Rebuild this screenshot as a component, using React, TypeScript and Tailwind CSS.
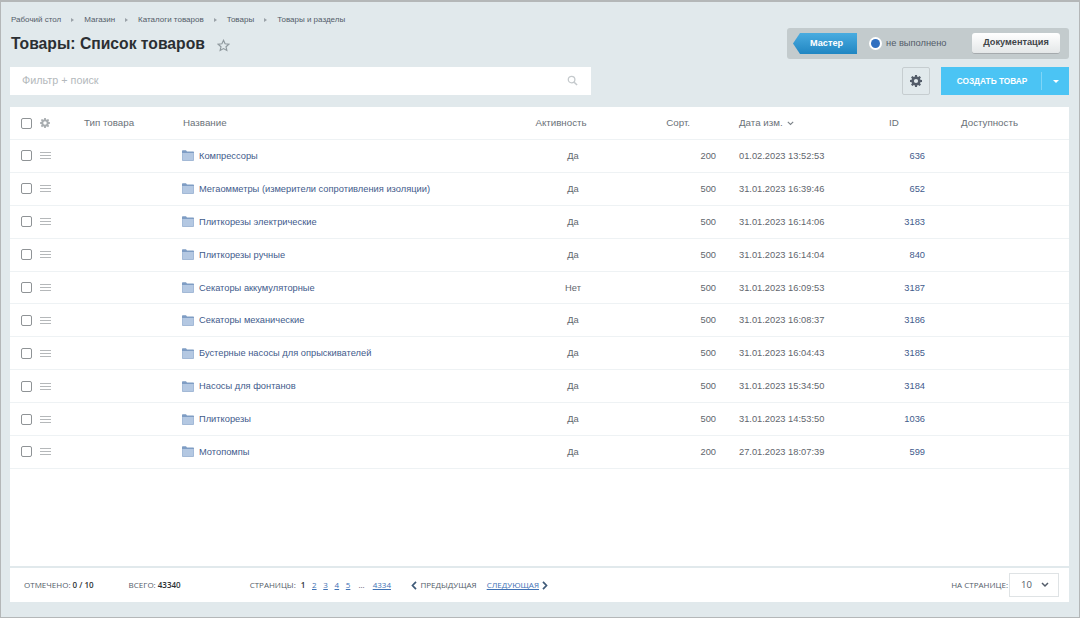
import React from 'react'

const crumbs = ['Рабочий стол', 'Магазин', 'Каталоги товаров', 'Товары', 'Товары и разделы']

const rows = [
  ['Компрессоры', 'Да', '200', '01.02.2023 13:52:53', '636'],
  ['Мегаомметры (измерители сопротивления изоляции)', 'Да', '500', '31.01.2023 16:39:46', '652'],
  ['Плиткорезы электрические', 'Да', '500', '31.01.2023 16:14:06', '3183'],
  ['Плиткорезы ручные', 'Да', '500', '31.01.2023 16:14:04', '840'],
  ['Секаторы аккумуляторные', 'Нет', '500', '31.01.2023 16:09:53', '3187'],
  ['Секаторы механические', 'Да', '500', '31.01.2023 16:08:37', '3186'],
  ['Бустерные насосы для опрыскивателей', 'Да', '500', '31.01.2023 16:04:43', '3185'],
  ['Насосы для фонтанов', 'Да', '500', '31.01.2023 15:34:50', '3184'],
  ['Плиткорезы', 'Да', '500', '31.01.2023 14:53:50', '1036'],
  ['Мотопомпы', 'Да', '200', '27.01.2023 18:07:39', '599'],
]

const cols = 'grid grid-cols-[30px_44px_99px_322px_112px_99px_23px_150px_36px_36px_1fr] items-center'

const Gear = ({ size, color }: { size: number; color: string }) => (
  <svg width={size} height={size} viewBox="0 0 16 16">
    <path
      fill={color}
      fillRule="evenodd"
      d="M6.7 0h2.6l.4 2.2 1.2.5L12.8 1.4l1.8 1.8-1.3 1.9.5 1.2 2.2.4v2.6l-2.2.4-.5 1.2 1.3 1.9-1.8 1.8-1.9-1.3-1.2.5-.4 2.1H6.7l-.4-2.1-1.2-.5-1.9 1.3-1.8-1.8 1.3-1.9-.5-1.2L0 9.3V6.7l2.2-.4.5-1.2-1.3-1.9 1.8-1.8 1.9 1.3 1.2-.5zM8 5.2a2.8 2.8 0 1 0 0 5.6 2.8 2.8 0 0 0 0-5.6z"
    />
  </svg>
)

const Checkbox = () => <span className="block w-[11px] h-[11px] rounded-[2px] border border-[#8f9396] bg-white" />

const Folder = () => (
  <svg width="12" height="11" viewBox="0 0 12 11" className="shrink-0">
    <path fill="#7f9dc4" d="M0 1.2C0 .6.4.2 1 .2h3l1 1.3h6c.6 0 1 .4 1 1v7.3c0 .6-.4 1-1 1H1c-.6 0-1-.4-1-1z" />
    <path fill="#b4c8e2" d="M.6 3h10.8c.2 0 .3.1.3.3v6.3c0 .4-.2.6-.6.6H.9c-.4 0-.6-.2-.6-.6V3.3c0-.2.1-.3.3-.3z" />
  </svg>
)

const Chevron = ({ dir }: { dir: 'left' | 'right' }) => (
  <svg width="6" height="9" viewBox="0 0 6 9">
    <path d={dir === 'left' ? 'M5 .8 1.5 4.5 5 8.2' : 'M1 .8 4.5 4.5 1 8.2'} fill="none" stroke="#3f5a78" strokeWidth="1.7" />
  </svg>
)

export default function App() {
  return (
    <div className="w-[1080px] h-[618px] overflow-hidden bg-[#e1e9ec] border border-[#b4b7b8] border-t-2 pl-[9px] pr-[9px] font-['Liberation_Sans',Arial,sans-serif]">
      <div className="flex items-center h-[17px] mt-[9px] text-[8px] text-[#535c69]">
        <span className="w-px" />
        {crumbs.map((c, i) => (
          <React.Fragment key={c}>
            {i > 0 && <span className="mx-[10px] w-0 h-0 border-y-[2.5px] border-y-transparent border-l-[3px] border-l-[#9aa2a8]" />}
            <span>{c}</span>
          </React.Fragment>
        ))}
      </div>

      <div className="flex items-start justify-between">
        <div className="flex items-center mt-[6px] ml-[1px]">
          <h1 className="text-[15.7px] leading-[20px] font-bold text-[#2b2f33]">Товары: Список товаров</h1>
          <svg width="13" height="13" viewBox="0 0 24 24" className="ml-[12px] mt-[2px]">
            <path d="M12 2.5l2.9 6.3 6.9.8-5.1 4.7 1.4 6.8-6.1-3.4-6.1 3.4 1.4-6.8L2.2 9.6l6.9-.8z" fill="none" stroke="#8f999e" strokeWidth="2.2" />
          </svg>
        </div>
        <div className="flex items-center w-[282px] h-[31px] mr-[1px] rounded-[3px] bg-[#c3cbcd]">
          <div className="flex items-center justify-center w-[64px] h-[21px] ml-[6px] pl-[3px] text-[9.2px] font-bold text-white bg-gradient-to-b from-[#49ace0] to-[#1f86c2] [clip-path:polygon(7px_0,100%_0,100%_100%,7px_100%,0_50%)]">
            Мастер
          </div>
          <span className="flex items-center justify-center w-[13px] h-[13px] ml-[12px] rounded-full bg-white">
            <span className="block w-[9px] h-[9px] rounded-full bg-[#2f6fc0]" />
          </span>
          <span className="ml-[4px] text-[9.3px] text-[#535c69]">не выполнено</span>
          <button className="w-[88px] h-[21px] ml-auto mr-[9px] rounded-[3px] bg-gradient-to-b from-white to-[#e4e7e8] border-b border-[#a5aaad] text-[9.2px] font-bold text-[#3f4549]">
            Документация
          </button>
        </div>
      </div>

      <div className="flex items-center mt-[8px] pr-[1px]">
        <div className="flex items-center justify-between w-[581px] h-[28px] px-[12px] pb-[1px] bg-white">
          <span className="text-[10.8px] text-[#b4b9bc]">Фильтр + поиск</span>
          <svg width="11" height="11" viewBox="0 0 12 12" className="mr-[1px]">
            <circle cx="5" cy="5" r="3.6" fill="none" stroke="#c4c9cc" strokeWidth="1.4" />
            <path d="M7.8 7.8 11 11" stroke="#c4c9cc" strokeWidth="1.6" />
          </svg>
        </div>
        <button className="flex items-center justify-center w-[28px] h-[28px] ml-auto rounded-[2px] border border-[#c6cdd0]">
          <Gear size={12} color="#535c69" />
        </button>
        <button className="flex items-center w-[128px] h-[28px] ml-[11px] bg-[#4bc4f4] text-white text-[8.3px] font-bold">
          <span className="w-[100px] text-center pl-[2px]">СОЗДАТЬ ТОВАР</span>
          <span className="w-px h-[18px] bg-[#7ed5f7]" />
          <span className="ml-[11px] w-0 h-0 border-x-[3px] border-x-transparent border-t-[3px] border-t-white" />
        </button>
      </div>

      <div className="mt-[12px] mr-[1px] h-[459px] bg-white text-[9.3px] text-[#5f666d]">
        <div className={`${cols} h-[33px] border-b border-[#eef2f4] text-[9.75px] text-[#6a7178]`}>
          <span className="pl-[11px]"><Checkbox /></span>
          <span><Gear size={10} color="#a8adb0" /></span>
          <span>Тип товара</span>
          <span>Название</span>
          <span className="text-center">Активность</span>
          <span className="text-right pr-[26px]">Сорт.</span>
          <span />
          <span className="flex items-center gap-[4px]">
            Дата изм.
            <svg width="7" height="5" viewBox="0 0 7 5"><path d="M.8.8l2.7 2.7L6.2.8" fill="none" stroke="#7b8288" strokeWidth="1.1" /></svg>
          </span>
          <span>ID</span>
          <span />
          <span>Доступность</span>
        </div>
        {rows.map((r) => (
          <div key={r[0]} className={`${cols} h-[32.9px] border-b border-[#eef2f4]`}>
            <span className="pl-[11px]"><Checkbox /></span>
            <span className="flex flex-col gap-[2px] w-[11px]">
              <i className="block h-px bg-[#b5b8ba]" />
              <i className="block h-px bg-[#b5b8ba]" />
              <i className="block h-px bg-[#b5b8ba]" />
            </span>
            <span />
            <span className="flex items-center gap-[5px] -ml-[1px] text-[#3f5b8c] whitespace-nowrap"><Folder /><span className="pt-[2px]">{r[0]}</span></span>
            <span className="text-center pl-[24px] pt-[2px]">{r[1]}</span>
            <span className="text-right pt-[2px]">{r[2]}</span>
            <span />
            <span className="pt-[2px]">{r[3]}</span>
            <span className="col-span-2 text-right pr-[36px] pt-[2px] text-[#3f5b8c]">{r[4]}</span>
            <span />
          </div>
        ))}
      </div>

      <div className="flex items-center h-[34px] mt-[2px] mr-[1px] pl-[14px] pr-[10px] bg-white text-[8px] text-[#535c69] font-['Open_Sans',sans-serif]">
        <span>ОТМЕЧЕНО: <b className="font-semibold text-[#2b2f33]">0 / 10</b></span>
        <span className="ml-[35px]">ВСЕГО: <b className="font-semibold text-[#2b2f33]">43340</b></span>
        <span className="ml-[69px]">СТРАНИЦЫ:</span>
        <b className="ml-[5px] font-semibold text-[#2b2f33]">1</b>
        {['2', '3', '4', '5'].map((p) => (
          <a key={p} className="ml-[6.7px] underline text-[#3f72b5]">{p}</a>
        ))}
        <span className="ml-[8px]">...</span>
        <a className="ml-[8px] underline text-[#3f72b5]">4334</a>
        <span className="flex items-center ml-[20.5px] gap-[3px]"><Chevron dir="left" />ПРЕДЫДУЩАЯ</span>
        <span className="flex items-center ml-[10px] gap-[3px]"><a className="underline text-[#3f72b5]">СЛЕДУЮЩАЯ</a><Chevron dir="right" /></span>
        <span className="ml-auto">НА СТРАНИЦЕ:</span>
        <span className="flex items-center justify-between w-[50px] h-[24px] ml-[1px] pl-[11px] pr-[9px] border border-[#dfe3e5] text-[9.5px]">
          10
          <svg width="8" height="6" viewBox="0 0 8 6"><path d="M1 1l3 3 3-3" fill="none" stroke="#535c69" strokeWidth="1.5" /></svg>
        </span>
      </div>
    </div>
  )
}
